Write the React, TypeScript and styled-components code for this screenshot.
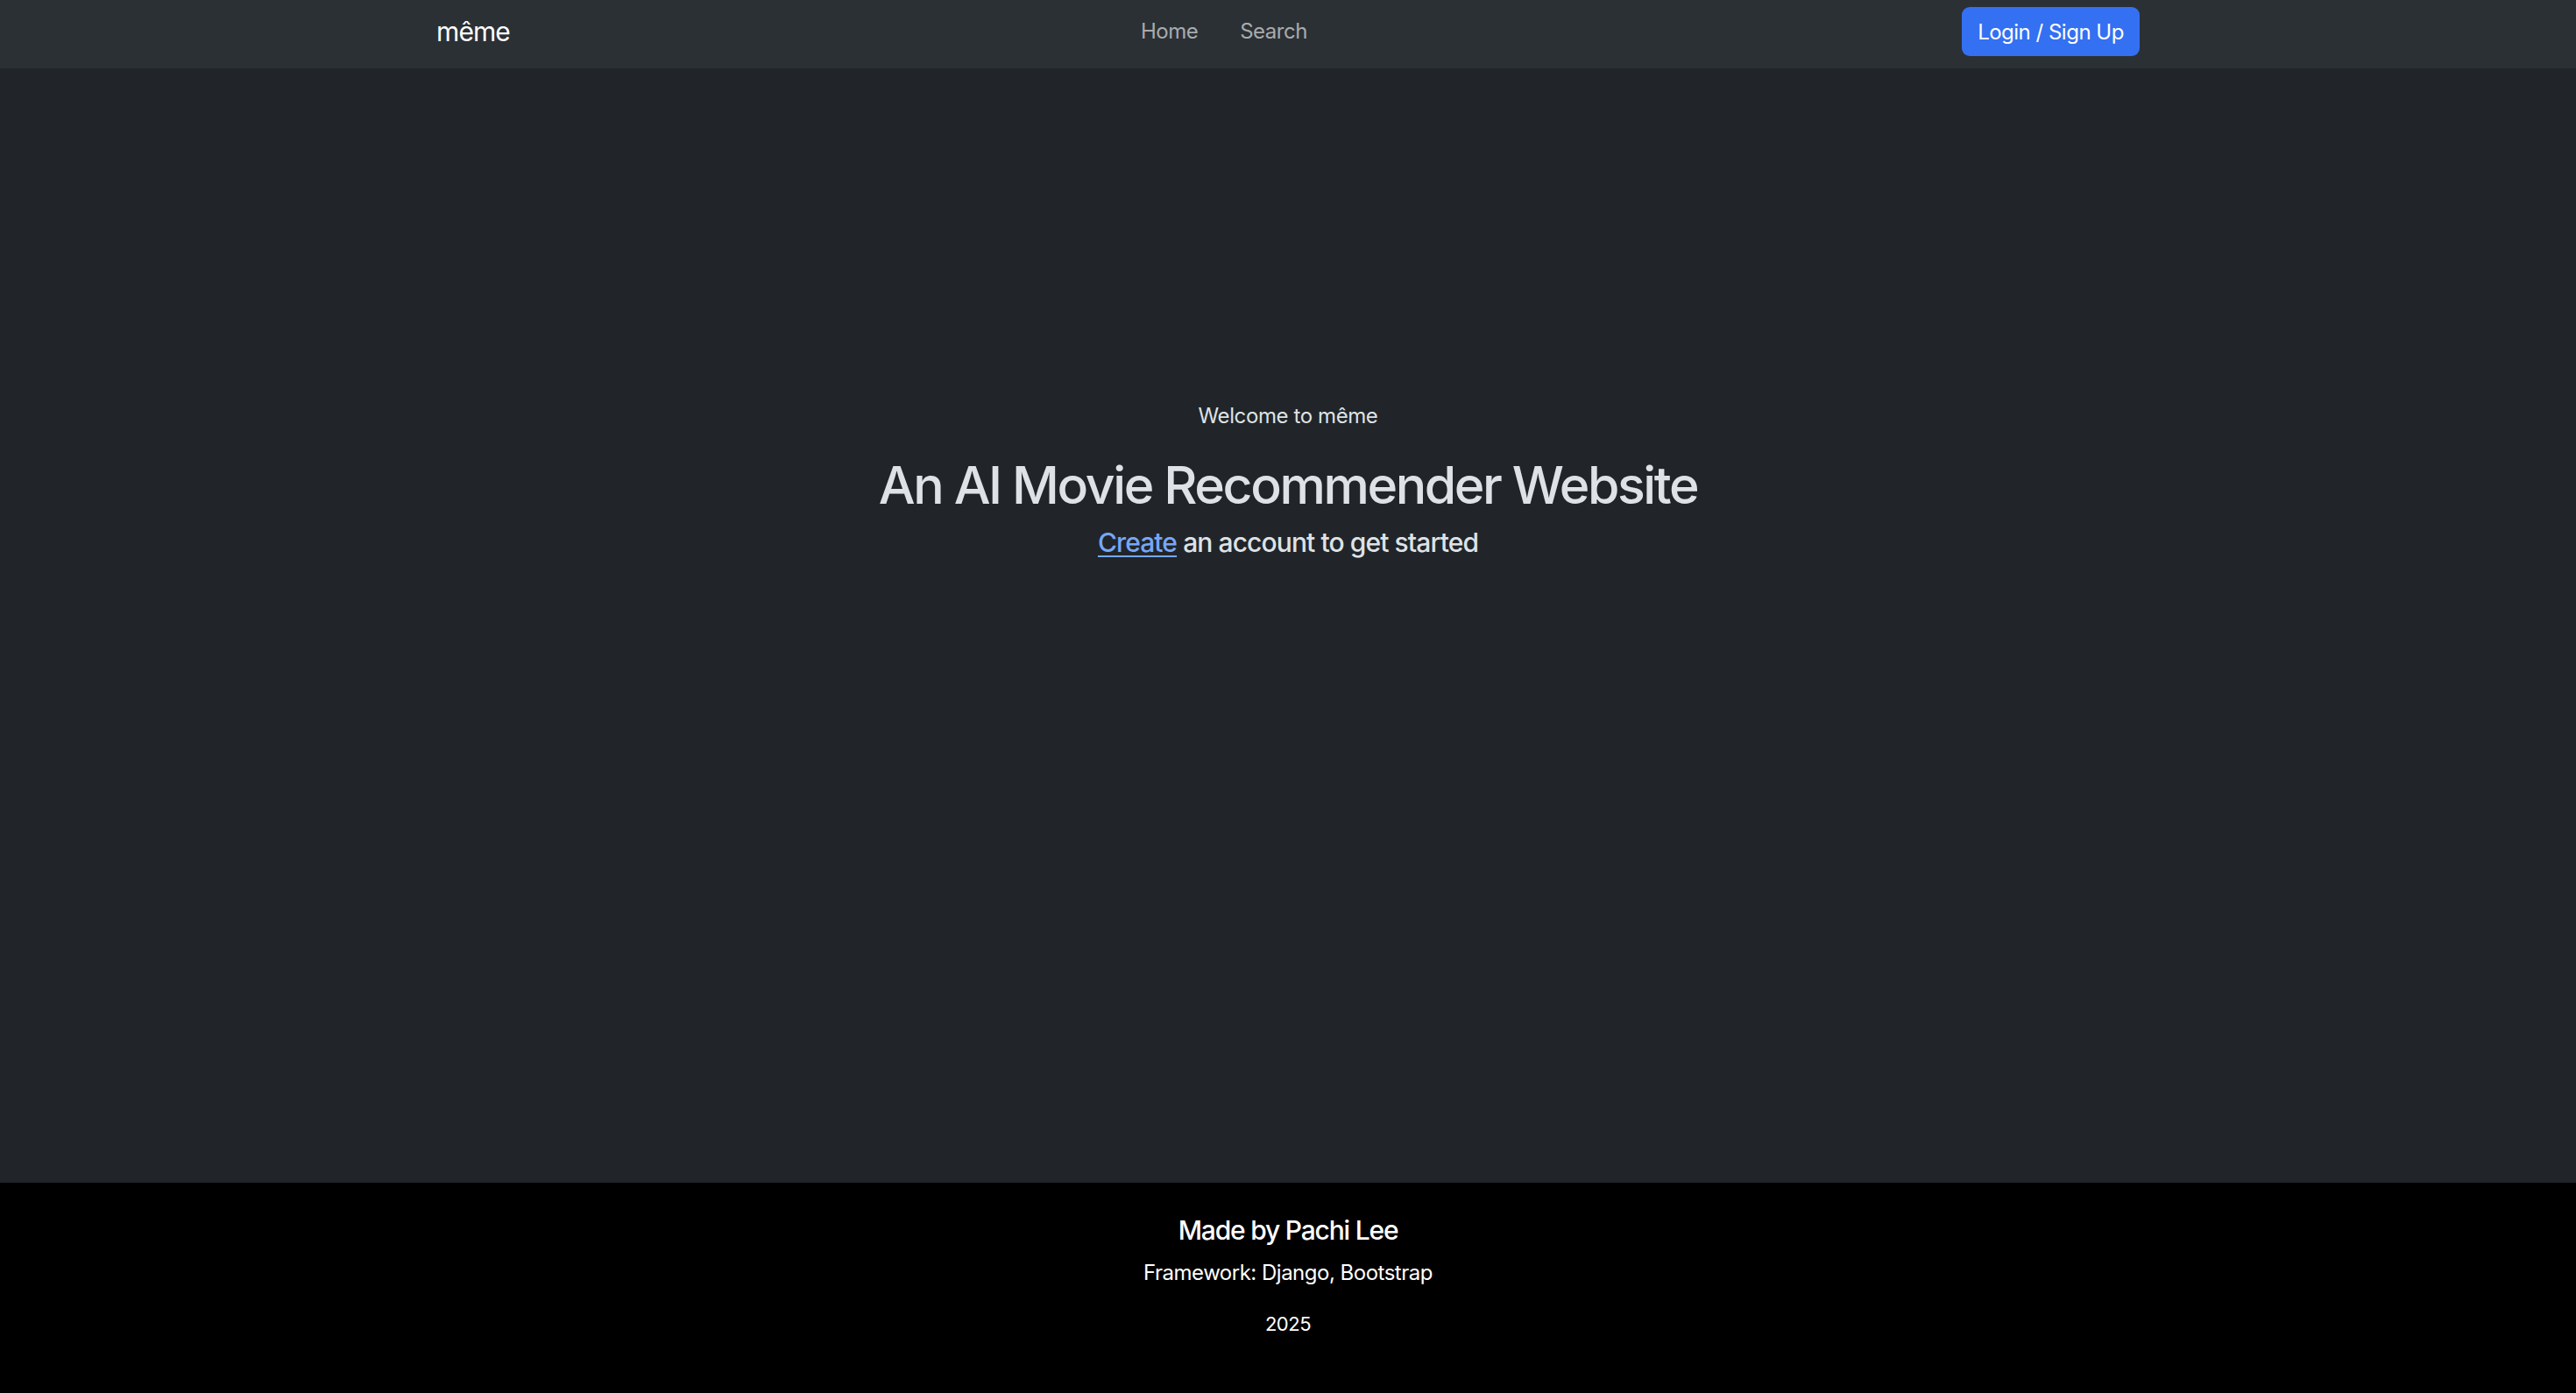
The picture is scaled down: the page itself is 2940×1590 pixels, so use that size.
import React from "react";
import styled, { createGlobalStyle } from "styled-components";

const GlobalStyle = createGlobalStyle`
  html, body {
    margin: 0;
    padding: 0;
    background: #212529;
  }
  body {
    font-family: Inter, "Noto Sans", "Liberation Sans", sans-serif;
    color: #dee2e6;
    -webkit-font-smoothing: antialiased;
  }
  * { box-sizing: border-box; }
`;

const Page = styled.div`
  display: flex;
  flex-direction: column;
  min-height: 1590px;
`;

const NavBar = styled.nav`
  background: #2b3035;
  height: 78px;
  padding: 8px 0 14px;
`;

const Container = styled.div`
  width: 1980px;
  margin: 0 auto;
  padding: 0 18px;
  height: 100%;
  display: flex;
  align-items: center;
`;

const Brand = styled.a`
  font-size: 30px;
  color: #ffffff;
  text-decoration: none;
  letter-spacing: -0.9px;
`;

const NavList = styled.ul`
  flex: 1;
  display: flex;
  list-style: none;
  margin: 0;
  padding: 0 0 0 712px;
`;

const NavLink = styled.a<{ $first?: boolean }>`
  display: block;
  font-size: 24px;
  line-height: 36px;
  padding: 10px 24px 10px ${(p) => (p.$first ? "8px" : "24px")};
  color: rgba(255, 255, 255, 0.6);
  text-decoration: none;
  letter-spacing: -0.5px;
`;

const LoginButton = styled.button`
  height: 56px;
  width: 203px;
  padding: 0;
  border: none;
  border-radius: 9px;
  background: #3470f2;
  color: #ffffff;
  font-family: inherit;
  font-size: 24px;
  letter-spacing: -0.5px;
`;

const Main = styled.main`
  flex: 1;
  display: flex;
  flex-direction: column;
  align-items: center;
  padding-top: 379px;
  text-align: center;
`;

const Welcome = styled.p`
  margin: 0 0 25px;
  font-size: 24px;
  line-height: 36px;
  letter-spacing: -0.4px;
`;

const Heading = styled.h1`
  margin: 0 0 11px;
  font-size: 59px;
  font-weight: 500;
  line-height: 72px;
  letter-spacing: -2.4px;
`;

const Lead = styled.h5`
  margin: 0;
  font-size: 30px;
  font-weight: 500;
  line-height: 36px;
  letter-spacing: -0.9px;
`;

const Link = styled.a`
  color: #76a7f8;
  text-decoration: underline;
  text-underline-offset: 4px;
  text-decoration-thickness: 2px;
`;

const Footer = styled.footer`
  background: #000000;
  height: 240px;
  padding-top: 36px;
  display: flex;
  flex-direction: column;
  align-items: center;
  color: #ffffff;
  text-align: center;
`;

const FooterTitle = styled.h5`
  margin: 0 0 13px;
  font-size: 30px;
  font-weight: 500;
  line-height: 36px;
  letter-spacing: -1.2px;
`;

const FooterText = styled.p<{ $small?: boolean }>`
  margin: 0 0 ${(p) => (p.$small ? "0" : "25px")};
  font-size: ${(p) => (p.$small ? "22px" : "24px")};
  line-height: ${(p) => (p.$small ? "31px" : "36px")};
  letter-spacing: -0.5px;
`;

export default function App() {
  return (
    <>
      <GlobalStyle />
      <Page>
        <NavBar>
          <Container>
            <Brand href="#">même</Brand>
            <NavList>
              <li>
                <NavLink $first href="#">Home</NavLink>
              </li>
              <li>
                <NavLink href="#">Search</NavLink>
              </li>
            </NavList>
            <LoginButton>Login / Sign Up</LoginButton>
          </Container>
        </NavBar>
        <Main>
          <Welcome>Welcome to même</Welcome>
          <Heading>An AI Movie Recommender Website</Heading>
          <Lead>
            <Link href="#">Create</Link> an account to get started
          </Lead>
        </Main>
        <Footer>
          <FooterTitle>Made by Pachi Lee</FooterTitle>
          <FooterText>Framework: Django, Bootstrap</FooterText>
          <FooterText $small>2025</FooterText>
        </Footer>
      </Page>
    </>
  );
}
